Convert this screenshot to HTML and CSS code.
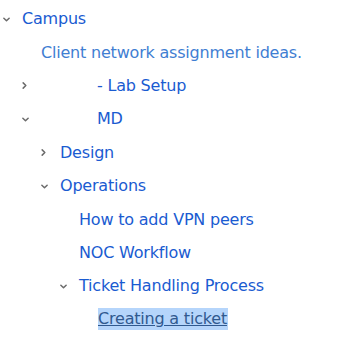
FILE: index.html
```html
<!DOCTYPE html>
<html>
<head>
<meta charset="utf-8">
<link rel="stylesheet" href="styles.css">
</head>
<body>
<ul class="tree">
  <li class="row lvl0"><span class="chev down"><svg viewBox="0 0 8 5" width="7" height="5"><path d="M1 1l3 3 3-3"/></svg></span><a class="link">Campus</a></li>
  <li class="row lvl1"><span class="chev none"></span><span class="desc">Client network assignment ideas.</span></li>
  <li class="row lvl1"><span class="chev right"><svg viewBox="0 0 5 8" width="5" height="7"><path d="M1 1l3 3-3 3"/></svg></span><span class="blank"></span><a class="link">- Lab Setup</a></li>
  <li class="row lvl1"><span class="chev down"><svg viewBox="0 0 8 5" width="7" height="5"><path d="M1 1l3 3 3-3"/></svg></span><span class="blank"></span><a class="link">MD</a></li>
  <li class="row lvl2"><span class="chev right"><svg viewBox="0 0 5 8" width="5" height="7"><path d="M1 1l3 3-3 3"/></svg></span><a class="link">Design</a></li>
  <li class="row lvl2"><span class="chev down"><svg viewBox="0 0 8 5" width="7" height="5"><path d="M1 1l3 3 3-3"/></svg></span><a class="link">Operations</a></li>
  <li class="row lvl3"><span class="chev none"></span><a class="link">How to add VPN peers</a></li>
  <li class="row lvl3"><span class="chev none"></span><a class="link">NOC Workflow</a></li>
  <li class="row lvl3"><span class="chev down"><svg viewBox="0 0 8 5" width="7" height="5"><path d="M1 1l3 3 3-3"/></svg></span><a class="link">Ticket Handling Process</a></li>
  <li class="row lvl4"><span class="chev none"></span><a class="link current">Creating a ticket</a></li>
</ul>
</body>
</html>
```
FILE: styles.css
```css
html, body {
  margin: 0;
  padding: 0;
  background: #ffffff;
}
body {
  font-family: "DejaVu Sans", sans-serif;
  font-size: 16px;
  letter-spacing: -0.2px;
}
.tree {
  list-style: none;
  margin: 0;
  padding: 2px 0 0 0;
}
.row {
  display: flex;
  align-items: center;
  height: 33.4px;
  white-space: nowrap;
}
.lvl0 { padding-left: 3px; }
.lvl1 { padding-left: 22px; }
.lvl2 { padding-left: 41px; }
.lvl3 { padding-left: 60px; }
.lvl4 { padding-left: 79px; }
.chev {
  width: 19px;
  flex: none;
  display: flex;
  align-items: center;
}
.chev svg {
  fill: none;
  stroke: #6b6b6b;
  stroke-width: 1.7;
  stroke-linecap: round;
  stroke-linejoin: round;
}
.chev.down svg { margin-top: 1px; }
.blank {
  width: 56px;
  flex: none;
}
.link {
  color: #1a5bd1;
  text-decoration: none;
}
.desc {
  color: #3f7ed2;
}
.current {
  color: #30598f;
  text-decoration: underline;
  background: #b5d5fb;
  padding: 1px 1px 2px 0;
}
```
